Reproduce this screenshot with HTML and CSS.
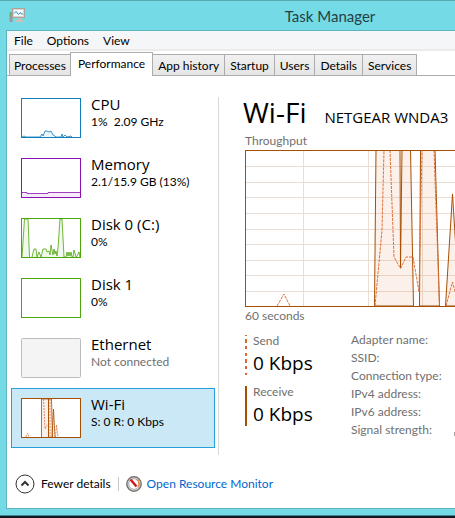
FILE: index.html
```html
<!DOCTYPE html>
<html lang="en">
<head>
    <meta charset="UTF-8">
    <meta name="viewport" content="width=device-width, initial-scale=1.0">
    <title>Task Manager</title>
    <link rel="stylesheet" href="styles.css">
</head>
<body>
    <div class="window">
        <header class="title-bar">
            <svg class="app-icon" width="16" height="15" viewBox="0 0 16 15" aria-hidden="true">
                <rect x="0.5" y="4" width="3" height="10" fill="#9a9a9a"/>
                <rect x="1" y="5" width="1" height="2" fill="#4db848"/>
                <rect x="3.5" y="0.5" width="12" height="9" fill="#d9d4cf" stroke="#aaa39d"/>
                <rect x="5" y="2" width="9" height="6" fill="#f7fcff"/>
                <path d="M5 5.500L7 3.500L9.500 6.500L11.500 4.500L12.500 6H14" fill="none" stroke="#2789c9"/>
                <path d="M8 10h4v2h2v2H6v-2h2z" fill="#c7c1bb"/>
            </svg>
            <h1 class="title">Task Manager</h1>
        </header>

        <div class="client">
            <nav class="menu">
                <button class="menu-item">File</button>
                <button class="menu-item">Options</button>
                <button class="menu-item">View</button>
            </nav>

            <div class="tabs" role="tablist">
                <button class="tab" role="tab">Processes</button>
                <button class="tab active" role="tab" aria-selected="true">Performance</button>
                <button class="tab" role="tab">App history</button>
                <button class="tab" role="tab">Startup</button>
                <button class="tab" role="tab">Users</button>
                <button class="tab" role="tab">Details</button>
                <button class="tab" role="tab">Services</button>
            </div>

            <div class="content">
                <aside class="sidebar">
                    <button class="resource">
                        <svg class="thumb cpu" viewBox="0 0 60 40">
                            <path class="area" d="M1 39l2-1 2 1h14l2-3 1 2 2-5 2 0 2 1 2 -1 2 4 2 1 1 1h5l1-3 1 3 2-2 2 2 4-1 1 1"/>
                            <rect class="frame" x="0.5" y="0.5" width="59" height="39"/>
                        </svg>
                        <span class="info">
                            <span class="name">CPU</span>
                            <span class="value">1%&nbsp; 2.09 GHz</span>
                        </span>
                    </button>
                    <button class="resource">
                        <svg class="thumb memory" viewBox="0 0 60 40">
                            <path class="area" d="M0.500 34.500H6V35.500H27V34.500H59.500V39.500H0.500z"/>
                            <rect class="frame" x="0.5" y="0.5" width="59" height="39"/>
                        </svg>
                        <span class="info">
                            <span class="name">Memory</span>
                            <span class="value">2.1/15.9 GB (13%)</span>
                        </span>
                    </button>
                    <button class="resource">
                        <svg class="thumb disk" viewBox="0 0 60 40">
                            <path class="area" d="M1 39L3.500 1H7L8.500 39M11 39L13 31H15L16 39L18 34L20 39L22 31H25L26 34L28 33L29 37L30 27L32 37L33 31L34 36L35 33L36 38L37 30L39 1H41L43 39L45 39L46 34L47 38L48 34L49 38L50 34L51 39H52L53 32L55 39L56 38L58 34L59 39"/>
                            <rect class="frame" x="0.5" y="0.5" width="59" height="39"/>
                        </svg>
                        <span class="info">
                            <span class="name">Disk 0 (C:)</span>
                            <span class="value">0%</span>
                        </span>
                    </button>
                    <button class="resource">
                        <svg class="thumb disk" viewBox="0 0 60 40">
                            <rect class="frame" x="0.5" y="0.5" width="59" height="39"/>
                        </svg>
                        <span class="info">
                            <span class="name">Disk 1</span>
                            <span class="value">0%</span>
                        </span>
                    </button>
                    <button class="resource offline">
                        <svg class="thumb ethernet" viewBox="0 0 60 40">
                            <rect class="frame" x="0.5" y="0.5" width="59" height="39" rx="1"/>
                        </svg>
                        <span class="info">
                            <span class="name">Ethernet</span>
                            <span class="value">Not connected</span>
                        </span>
                    </button>
                    <button class="resource selected">
                        <svg class="thumb wifi" viewBox="0 0 60 40">
                            <path class="area" d="M20.500 39V1H27.500V39M27.500 39V1H30.500L31.500 39M31 39L32.500 11L34 39"/>
                            <path class="dashed" d="M5 39L6.500 35L8 39M22.500 1L24 31L26 27M29 1V39M34.500 39L35.500 27L37 39"/>
                            <rect class="frame" x="0.5" y="0.5" width="59" height="39"/>
                        </svg>
                        <span class="info">
                            <span class="name">Wi-Fi</span>
                            <span class="value">S: 0 R: 0 Kbps</span>
                        </span>
                    </button>
                </aside>

                <main class="details">
                    <div class="heading">
                        <h2 class="device">Wi-Fi</h2>
                        <span class="adapter">NETGEAR WNDA3</span>
                    </div>
                    <div class="caption">Throughput</div>
                    <svg class="chart" width="390" height="157" viewBox="0 0 390 157" role="img" aria-label="Wi-Fi throughput">
                        <rect class="chart-bg" width="390" height="157"/>
                        <path class="grid" d="M0 16.500H390M0 32.500H390M0 47.500H390M0 63.500H390M0 79.500H390M0 94.500H390M0 110.500H390M0 125.500H390M0 141.500H390M58.500 0V157M123.500 0V157M177.500 0V157M242.500 0V157M307.500 0V157M361.500 0V157"/>
                        <path class="receive" d="M129.500 156L131 0H155L155.500 118L157 0H165.500L168.500 156zM174.500 156L175.500 0H190L194.500 156zM200.500 156L207.500 44L214.500 156z"/>
                        <path class="send" d="M32 156L39 144L45 156M130 156L137 80L139 0M145 0L149 107L155.500 118.500L161 107H168L174 142L177 0M189 0L194.500 156M201 156L207.500 132L214 156"/>
                        <rect class="chart-frame" x="0.5" y="0.5" width="389" height="156"/>
                    </svg>
                    <div class="caption axis">60 seconds</div>

                    <div class="stats">
                        <div class="rates">
                            <div class="rate rate-send">
                                <span class="label">Send</span>
                                <span class="speed">0 Kbps</span>
                            </div>
                            <div class="rate rate-receive">
                                <span class="label">Receive</span>
                                <span class="speed">0 Kbps</span>
                            </div>
                        </div>
                        <ul class="properties">
                            <li>Adapter name:</li>
                            <li>SSID:</li>
                            <li>Connection type:</li>
                            <li>IPv4 address:</li>
                            <li>IPv6 address:</li>
                            <li class="signal">
                                Signal strength:
                                <svg width="20" height="12" viewBox="0 0 20 12" aria-hidden="true">
                                    <path d="M0 8h3v4H0zM4 6h3v6H4zM8 4h3v8H8zM12 2h3v10h-3zM16 0h3v12h-3z" fill="#a7a09a"/>
                                </svg>
                            </li>
                        </ul>
                    </div>
                </main>
            </div>

            <footer class="footer">
                <button class="fewer">
                    <svg width="20" height="20" viewBox="0 0 20 20" aria-hidden="true">
                        <circle cx="10" cy="10" r="9" fill="#fff" stroke="#333"/>
                        <path d="M6.500 11.500L10 8L13.500 11.500" fill="none" stroke="#333" stroke-width="2"/>
                    </svg>
                    Fewer details
                </button>
                <span class="separator"></span>
                <a class="monitor" href="#">
                    <svg width="16" height="16" viewBox="0 0 16 16" aria-hidden="true">
                        <circle cx="8" cy="8" r="7.200" fill="#e9e7e4" stroke="#77736f" stroke-width="1.500"/>
                        <circle cx="8" cy="8" r="5.300" fill="#fdfdfd" stroke="#aaa"/>
                        <path d="M10.500 3.500A5 5 0 0 1 12 11" fill="none" stroke="#e8833a" stroke-width="1.300"/>
                        <path d="M4.500 3.500L10.500 10.500" stroke="#d01818" stroke-width="2.400"/>
                    </svg>
                    Open Resource Monitor
                </a>
            </footer>
        </div>
    </div>
</body>
</html>
```
FILE: styles.css
```css
* {
    box-sizing: border-box;
}
body {
    margin: 0;
    overflow: hidden;
    background: #101722; /* Desktop behind the window */
    font-family: Lato, "Open Sans", sans-serif;
    font-size: 12px;
    line-height: 16px;
    color: #000;
}
button {
    font: inherit;
    color: inherit;
    background: none;
    border: 0;
    padding: 0;
    text-align: left;
    white-space: nowrap;
}
svg {
    display: block;
    flex: none;
}
.window {
    min-width: 660px;
    padding: 0 6px 6px;
    background: #74dbe6;
    border-top: 1px solid #57a9b2;
    border-bottom: 1px solid #3f858e;
}

/* Title bar */
.title-bar {
    display: flex;
    align-items: center;
    height: 29px;
    padding: 0 3px;
}
.title {
    flex: 1;
    margin: 0 16px 0 0;
    font-size: 15px;
    font-weight: 400;
    line-height: 20px;
    text-align: center;
    color: #263f42;
}
.client {
    background: #fff;
    border: 1px solid #5fb4bd;
}

/* Menu */
.menu {
    display: flex;
    gap: 14px;
    height: 20px;
    padding: 1px 7px 0;
    background: #f5f6f7;
    border-bottom: 2px solid #ebebeb;
}

/* Tabs */
.tabs {
    display: flex;
    align-items: flex-end;
    height: 25px;
    padding-left: 2px;
    border-bottom: 1px solid #acacac;
}
.tab {
    height: 21px;
    padding: 1px 5px 0;
    background: linear-gradient(#f1f1f1, #e5e5e5);
    border: 1px solid #acacac;
    border-bottom: 0;
    margin-right: -1px;
}
.tab:first-child {
    padding: 1px 4px 0;
}
.tab.active {
    height: 24px;
    margin-bottom: -1px;
    padding: 0 7px 2px;
    background: #fff;
}

/* Resource list */
.content {
    display: flex;
    padding: 12px 4px 0;
}
.sidebar {
    width: 208px;
    margin-right: 26px;
    border-right: 1px solid #d9d9d9;
    border-image: linear-gradient(transparent 10px, #d9d9d9 10px) 1;
    padding: 0 3px 7px 0;
}
.resource {
    display: flex;
    align-items: flex-start;
    gap: 10px;
    width: 100%;
    height: 60px;
    padding: 9px;
    border: 1px solid transparent;
}
.resource.selected {
    background: #cbe8f6;
    border-color: #26a0da;
}
.info {
    display: flex;
    flex-direction: column;
    margin-top: -4px;
}
.name,
.device,
.adapter,
.speed {
    font-family: "Open Sans", "Noto Sans", sans-serif;
    font-weight: 400;
}
.name {
    font-size: 15px;
    line-height: 20px;
}
.offline .value {
    color: #707070;
}
.thumb {
    width: 60px;
    height: 40px;
    background: #fff;
    fill: none;
    stroke: currentColor;
}
.area {
    fill: currentColor;
    fill-opacity: 0.08;
    stroke-opacity: 0.8;
}
.dashed {
    stroke: #e38a5e;
    stroke-dasharray: 2 1;
}
.cpu {
    color: #117dbb;
}
.memory {
    color: #8b12ae;
}
.disk {
    color: #4da60c;
}
.wifi {
    color: #a74f01;
}
.ethernet {
    color: #bcbcbc;
}
.ethernet .frame {
    fill: #f4f4f4;
}

/* Wi-Fi details */
.details {
    flex: 1;
    padding-top: 6px;
}
.heading {
    display: flex;
    align-items: baseline;
    gap: 18px;
    height: 39px;
    line-height: 36px;
}
.device {
    margin: 0 0 0 -2px;
    font-size: 28px;
}
.adapter {
    font-size: 15px;
}
.caption {
    color: #707070;
}
.caption + .chart {
    margin-top: 1px;
}
.axis {
    padding-top: 1px;
}
.chart-bg {
    fill: #fff;
}
.grid {
    stroke: #eaded4;
}
.receive {
    fill: #d87a30;
    fill-opacity: 0.1;
    stroke: #a74f01;
}
.send {
    fill: none;
    stroke: #e0703a;
    stroke-dasharray: 3 1;
}
.chart-frame {
    fill: none;
    stroke: #a74f01;
}
.stats {
    display: flex;
    gap: 36px;
    padding-top: 7px;
    color: #707070;
}
.rates {
    display: flex;
    flex-direction: column;
    gap: 11px;
    padding-top: 4px;
}
.rate {
    display: flex;
    flex-direction: column;
    width: 70px;
    height: 40px;
    padding-left: 6px;
    border-left: 2px solid #a74f01;
    white-space: nowrap;
}
.rate-send {
    border-image: repeating-linear-gradient(#e0642b 0 3px, transparent 3px 6px) 2;
    border-image-width: 0 0 0 2px;
}
.label {
    line-height: 12px;
}
.speed {
    font-size: 19px;
    line-height: 32px;
    color: #000;
}
.properties {
    margin: 0;
    padding: 0;
    list-style: none;
    line-height: 18px;
}
.signal {
    display: flex;
    align-items: center;
    gap: 22px;
}

/* Footer */
.footer {
    display: flex;
    align-items: center;
    height: 53px;
    padding: 4px 8px 0;
}
.fewer,
.monitor {
    display: flex;
    align-items: center;
    gap: 6px;
}
.monitor {
    gap: 5px;
    color: #0066cc;
    text-decoration: none;
}
.separator {
    width: 1px;
    height: 14px;
    margin: 0 7px;
    background: #c8c8c8;
}
```
